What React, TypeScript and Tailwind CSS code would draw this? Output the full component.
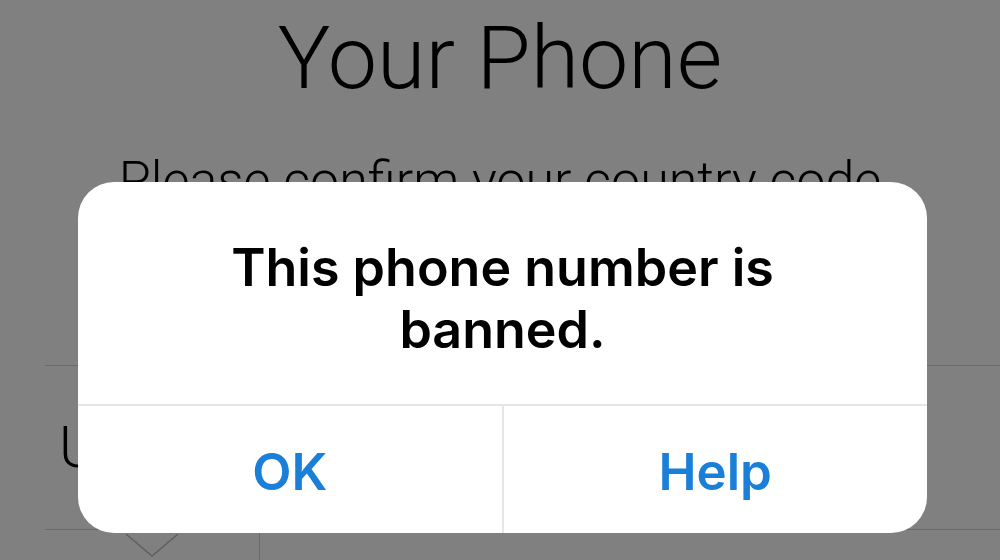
import React from 'react';

export default function App() {
    return (
        <div className="relative w-[1000px] h-[560px] overflow-hidden bg-[#808080]" style={{ fontFamily: 'Roboto, "Liberation Sans", sans-serif' }}>
            {/* page behind the dim overlay */}
            <div className="flex flex-col">
                <h1 className="mt-[8px] text-center text-[88px] leading-[100px] font-light text-black">Your Phone</h1>
                <p className="mt-[44px] text-center text-[52px] leading-[58px] font-light text-black">Please confirm your country code</p>
                <div className="mt-[155px] ml-[45px] border-t border-[#6a6a6a]" />
                <div className="ml-[45px] h-[163px] flex items-center pl-[14px]">
                    <span className="text-[58px] font-light text-black">United States</span>
                </div>
                <div className="ml-[45px] border-t border-[#6a6a6a] flex h-[40px]">
                    <div className="w-[215px] border-r border-[#6a6a6a] flex justify-center pt-[3px]">
                        <svg width="56" height="24" viewBox="0 0 56 24">
                            <polyline points="2,1 28,23 54,1" fill="none" stroke="#5f5f5f" strokeWidth="1.5" />
                        </svg>
                    </div>
                </div>
            </div>

            {/* alert */}
            <div className="absolute left-[78px] top-[182px] w-[849px] h-[351px] rounded-[36px] bg-white flex flex-col" style={{ fontFamily: 'Inter, "Open Sans", sans-serif' }}>
                <div className="h-[224px] flex items-center justify-center border-b-2 border-[#e6e6e6]">
                    <p className="text-center text-[52px] leading-[62px] font-semibold text-black w-[620px] pt-[12px]">This phone number is banned.</p>
                </div>
                <div className="flex flex-1">
                    <div className="flex-1 flex items-center justify-center border-r-2 border-[#e6e6e6] text-[51px] font-semibold text-[#1a7fd8] pt-[6px]">OK</div>
                    <div className="flex-1 flex items-center justify-center text-[51px] font-semibold text-[#1a7fd8] pt-[6px]">Help</div>
                </div>
            </div>
        </div>
    );
}
